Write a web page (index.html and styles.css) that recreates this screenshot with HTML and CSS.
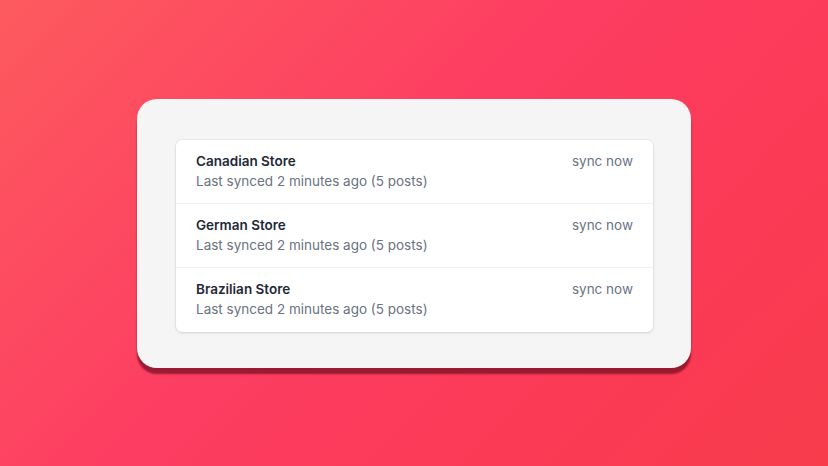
FILE: index.html
```html
<!DOCTYPE html>
<html lang="en">
<head>
    <meta charset="UTF-8">
    <meta name="viewport" content="width=device-width, initial-scale=1.0">
    <title>Store Sync</title>
    <link rel="stylesheet" href="styles.css">
</head>
<body>
    <div class="panel">
        <ul class="stores">
            <li class="store">
                <div class="info">
                    <p class="name">Canadian Store</p>
                    <p class="meta">Last synced 2 minutes ago (5 posts)</p>
                </div>
                <a class="sync" href="#">sync now</a>
            </li>
            <li class="store">
                <div class="info">
                    <p class="name">German Store</p>
                    <p class="meta">Last synced 2 minutes ago (5 posts)</p>
                </div>
                <a class="sync" href="#">sync now</a>
            </li>
            <li class="store">
                <div class="info">
                    <p class="name">Brazilian Store</p>
                    <p class="meta">Last synced 2 minutes ago (5 posts)</p>
                </div>
                <a class="sync" href="#">sync now</a>
            </li>
        </ul>
    </div>
</body>
</html>
```

FILE: styles.css
```css
:root {
    --panel: #f5f5f5;
    --text: #1f2937;
    --muted: #6b7280;
    --line: #eeeff1;
}
html, body {
    height: 100%;
}
body {
    margin: 0;
    font-family: 'Inter', 'Liberation Sans', sans-serif;
    background: linear-gradient(135deg, #fd5a5e 0%, #fd3d62 45%, #fb3a55 75%, #f83c4c 100%);
    display: flex;
    align-items: center;
    justify-content: center;
}
.panel {
    width: 554px;
    height: 269px;
    box-sizing: border-box;
    padding: 41px 38px 0 39px;
    background: var(--panel);
    border-radius: 20px;
    box-shadow: 0 6px 2px rgba(120, 15, 35, 0.75);
}
.stores {
    list-style: none;
    margin: 0;
    padding: 0;
    background: #fff;
    border-radius: 6px;
    box-shadow: 0 1px 3px rgba(0, 0, 0, 0.12), 0 0 0 1px rgba(0, 0, 0, 0.03);
}
.store {
    display: flex;
    justify-content: space-between;
    align-items: flex-start;
    height: 64px;
    box-sizing: border-box;
    padding: 11px 20px 12px;
    border-bottom: 1px solid var(--line);
}
.store:last-child {
    border-bottom: none;
}
.name, .meta {
    margin: 0;
    font-size: 13.5px;
    line-height: 20px;
}
.name {
    font-weight: 600;
    color: var(--text);
}
.meta {
    color: var(--muted);
}
.sync {
    font-size: 13.5px;
    line-height: 20px;
    color: var(--muted);
    text-decoration: none;
}
```
